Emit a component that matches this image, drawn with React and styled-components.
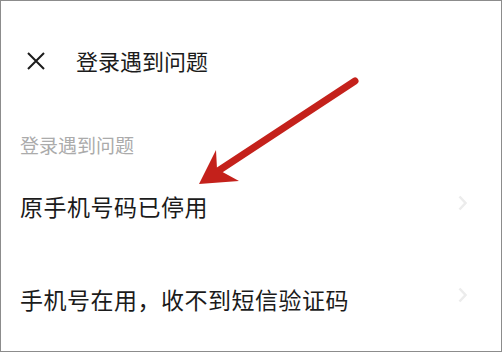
import React from 'react';
import styled, { createGlobalStyle } from 'styled-components';

const GlobalStyle = createGlobalStyle`
  html, body {
    margin: 0;
    padding: 0;
    background: #fff;
  }
  body {
    font-family: "Noto Sans CJK SC", "Noto Sans", sans-serif;
  }
`;

const Frame = styled.div`
  position: relative;
  width: 502px;
  height: 352px;
  box-sizing: border-box;
  border: 1px solid #8c8c8c;
  background: #fff;
  overflow: hidden;
  display: flex;
  flex-direction: column;
`;

const Header = styled.div`
  display: flex;
  align-items: center;
  height: 42px;
  margin-top: 38px;
  padding-left: 26px;
  gap: 31px;
`;

const CloseButton = styled.div`
  width: 18px;
  height: 18px;
  margin-top: 2px;
  display: flex;
  align-items: center;
  justify-content: center;
`;

const Title = styled.h1`
  margin: 0;
  font-size: 22px;
  font-weight: 400;
  color: #1b1b1b;
  line-height: 1;
`;

const SectionLabel = styled.div`
  margin-top: 48px;
  height: 30px;
  display: flex;
  align-items: center;
  padding-left: 19px;
  font-size: 19px;
  color: #ababab;
`;

const Row = styled.div`
  display: flex;
  align-items: center;
  justify-content: space-between;
  height: 93px;
  padding: 0 34px 0 19px;
`;

const RowText = styled.span`
  font-size: 23px;
  color: #1b1b1b;
  letter-spacing: 0.5px;
`;

const Chevron = styled.svg`
  width: 9px;
  height: 16px;
  margin-top: ${(p) => p.$offset || 0}px;
`;

const Arrow = styled.svg`
  position: absolute;
  left: 0;
  top: 0;
  pointer-events: none;
`;

const items = [
  { text: '原手机号码已停用', offset: -6 },
  { text: '手机号在用，收不到短信验证码', offset: -8 },
];

export default function App() {
  return (
    <>
      <GlobalStyle />
      <Frame>
        <Header>
          <CloseButton>
            <svg width="18" height="18" viewBox="0 0 18 18">
              <path d="M1 1 L17 17 M17 1 L1 17" stroke="#1b1b1b" strokeWidth="2" fill="none" />
            </svg>
          </CloseButton>
          <Title>登录遇到问题</Title>
        </Header>
        <SectionLabel>登录遇到问题</SectionLabel>
        {items.map((item, i) => (
          <Row key={i}>
            <RowText>{item.text}</RowText>
            <Chevron $offset={item.offset} viewBox="0 0 9 16">
              <path d="M1.5 1.5 L7.5 8 L1.5 14.5" stroke="#ececec" strokeWidth="2.5" fill="none" />
            </Chevron>
          </Row>
        ))}
        <Arrow width="502" height="352" viewBox="0 0 502 352">
          <line x1="354" y1="80" x2="214" y2="172" stroke="#c4211b" strokeWidth="7" strokeLinecap="round" />
          <path d="M198 183 L215 149 L216 168 L238 180 Z" fill="#c4211b" />
        </Arrow>
      </Frame>
    </>
  );
}
